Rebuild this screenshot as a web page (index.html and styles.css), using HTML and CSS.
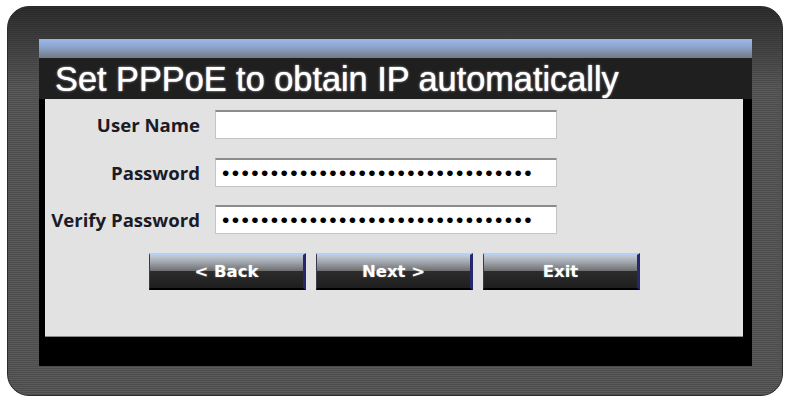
FILE: index.html
```html
<!DOCTYPE html>
<html>
<head>
<meta charset="utf-8">
<link rel="stylesheet" href="styles.css">
</head>
<body>
<div class="frame">
  <div class="panel">
    <div class="header-strip"></div>
    <div class="title-bar"><h1 class="title">Set PPPoE to obtain IP automatically</h1></div>
    <div class="content">
      <form class="form">
        <label class="label" for="user">User Name</label>
        <input class="field" id="user" type="text" value="">
        <label class="label" for="pass">Password</label>
        <input class="field" id="pass" type="password" value="abcdefghijabcdefghijabcdefghijab">
        <label class="label" for="verify">Verify Password</label>
        <input class="field" id="verify" type="password" value="abcdefghijabcdefghijabcdefghijab">
      </form>
      <div class="buttons">
        <button class="btn" type="button">&lt; Back</button>
        <button class="btn" type="button">Next &gt;</button>
        <button class="btn" type="button">Exit</button>
      </div>
    </div>
    <div class="panel-foot"></div>
  </div>
</div>
</body>
</html>
```
FILE: styles.css
```css
html, body {
  margin: 0;
  padding: 0;
  background: #ffffff;
}

.frame {
  box-sizing: border-box;
  margin: 6px 0 0 7px;
  width: 776px;
  height: 390px;
  padding: 32px 30px 29px 31px;
  border: 1px solid #2b2b2b;
  border-radius: 22px;
  background:
    linear-gradient(to bottom, rgba(20,20,20,0.65) 0px, rgba(20,20,20,0.3) 40px, rgba(20,20,20,0) 80px),
    repeating-linear-gradient(to bottom, #5a5a5a 0px, #5a5a5a 1px, #4c4c4c 1px, #4c4c4c 2px);
}

.panel {
  display: flex;
  flex-direction: column;
  width: 713px;
  height: 327px;
  background: #000000;
}

.header-strip {
  height: 19px;
  background: linear-gradient(to bottom, #9bb8e8 0%, #8ea6cf 40%, #727985 100%);
}

.title-bar {
  height: 41px;
  background: #1f1f1f;
  display: flex;
  align-items: center;
}

.title {
  margin: 2px 0 0 16px;
  font-family: "Liberation Sans", Arial, sans-serif;
  font-weight: normal;
  font-size: 34.3px;
  line-height: 1;
  color: #ffffff;
  text-shadow: 0 0 1px #ffffff, 0 0 3px rgba(255,255,255,0.45);
}

.content {
  box-sizing: border-box;
  height: 238px;
  margin: 0 9px 0 6px;
  padding-top: 11px;
  background: #e2e2e2;
  border-bottom: 1px solid #8a8a8a;
}

.form {
  display: grid;
  grid-template-columns: 155px 342px;
  column-gap: 15px;
  row-gap: 18.5px;
  align-items: center;
  margin: 0;
}

.label {
  text-align: right;
  font-family: "Open Sans", "DejaVu Sans", sans-serif;
  font-weight: 700;
  font-size: 18.6px;
  color: #1b1b28;
  white-space: nowrap;
}

.field {
  box-sizing: border-box;
  width: 342px;
  height: 29px;
  margin: 0;
  padding: 0 0 0 6px;
  border: 1px solid #c4c4c4;
  border-top: 2px solid #8c8c8c;
  background: #ffffff;
  font-family: "Liberation Sans", Arial, sans-serif;
  font-size: 21px;
  letter-spacing: 2.4px;
  color: #000000;
  outline: none;
}

.buttons {
  display: flex;
  justify-content: center;
  gap: 10px;
  margin-top: 19px;
  padding-left: 1px;
}

.btn {
  box-sizing: border-box;
  width: 157px;
  height: 37px;
  margin: 0;
  padding: 0 0 1px 0;
  border: none;
  border-top: 2px solid #b4d0f6;
  border-left: 1px solid #3a3a4a;
  border-right: 3px solid #272770;
  border-bottom: 2px solid #000000;
  background: linear-gradient(to bottom, #c4ccd8 0%, #a0a6ae 22%, #6e6e6e 48%, #2c2c2c 50%, #1e1e1e 100%);
  font-family: "DejaVu Sans", Verdana, sans-serif;
  font-weight: 700;
  font-size: 16.5px;
  color: #ffffff;
  text-shadow: 0 0 2px rgba(255,255,255,0.35);
  cursor: pointer;
}

.panel-foot {
  flex: 1;
  background: #000000;
}
```
